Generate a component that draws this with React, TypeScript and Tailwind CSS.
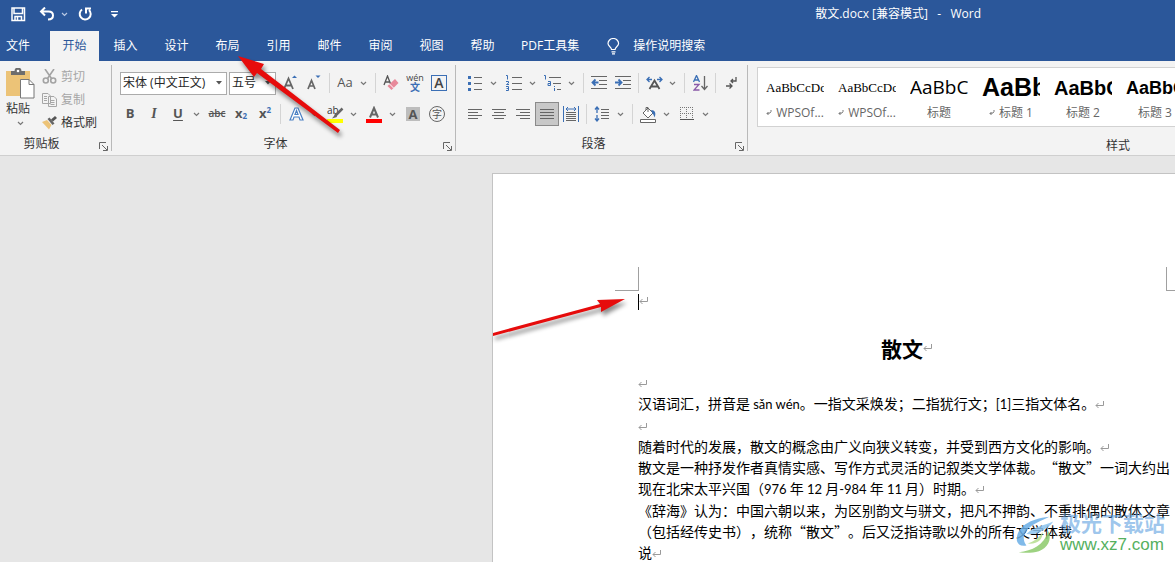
import { ReactNode } from 'react';
import clsx from 'clsx';

const tabs = ['开始', '插入', '设计', '布局', '引用', '邮件', '审阅', '视图', '帮助'];

const styleItems = [
  { name: 'WPSOf...', sample: 'AaBbCcDd', mark: true, font: "font-['Liberation_Serif',serif] text-[13px]" },
  { name: 'WPSOf...', sample: 'AaBbCcDd', mark: true, font: "font-['Liberation_Serif',serif] text-[13px]" },
  { name: '标题', sample: 'AaBbC', mark: false, font: 'text-[19px]' },
  { name: '标题 1', sample: 'AaBb', mark: true, font: "font-['Liberation_Sans',sans-serif] text-[25px] font-bold" },
  { name: '标题 2', sample: 'AaBbC', mark: false, font: "font-['Liberation_Sans',sans-serif] text-[20px] font-bold" },
  { name: '标题 3', sample: 'AaBbC', mark: false, font: "font-['Liberation_Sans',sans-serif] text-[18px] font-bold" },
  { name: '标题 4', sample: 'AaBbC', mark: false, font: "font-['Liberation_Sans',sans-serif] text-[18px] font-bold" },
];

function Chevron() {
  return (
    <svg width="7" height="5" viewBox="0 0 7 5" fill="none" stroke="currentColor">
      <path d="M1 1l2.5 2.5L6 1" strokeWidth="1.2" />
    </svg>
  );
}

function ToolButton({ label, active, children }: { label: string; active?: boolean; children: ReactNode }) {
  return (
    <button
      type="button"
      aria-label={label}
      className={clsx(
        'flex h-6 w-6 shrink-0 items-center justify-center',
        active && 'border border-[#8a8a8a] bg-[#c8c8c8]'
      )}
    >
      {children}
    </button>
  );
}

function SplitButton({ label, children }: { label: string; children: ReactNode }) {
  return (
    <div className="mr-[3px] flex shrink-0 items-center">
      <ToolButton label={label}>{children}</ToolButton>
      <button type="button" aria-label={`${label}选项`} className="flex h-6 w-3 items-center justify-center text-[#777]">
        <Chevron />
      </button>
    </div>
  );
}

function Separator() {
  return (
    <div className="flex h-5 w-[7px] shrink-0 justify-center">
      <div className="w-px bg-[#d4d4d4]" />
    </div>
  );
}

function ComboBox({ label, value, className }: { label: string; value: string; className: string }) {
  return (
    <div className={clsx('mr-0.5 flex h-[23px] items-center border border-[#ababab] bg-white pr-1 pl-0.5', className)}>
      <select aria-label={label} defaultValue={value} className="min-w-0 flex-1 appearance-none bg-transparent text-[#262626] outline-none">
        <option value={value}>{value}</option>
      </select>
      <svg width="6" height="4" viewBox="0 0 6 4" fill="#555">
        <path d="M0 0h6L3 3.5z" />
      </svg>
    </div>
  );
}

function RibbonGroup({ title, className, children }: { title: string; className: string; children: ReactNode }) {
  return (
    <section className={clsx('my-1 flex shrink-0 flex-col border-r border-[#b9b9b9]', className)}>
      <div className="h-[71px]">{children}</div>
      <div className="flex h-4 items-center">
        <h2 className="flex-1 pt-0.5 text-center leading-4">{title}</h2>
        <button type="button" aria-label={`${title}设置`} className="flex h-4 w-4 items-end pl-1">
          <svg width="9" height="9" viewBox="0 0 9 9" fill="none" stroke="#666">
            <path d="M.5 7V.5H7M3 3l5 5M8.500 4v4.500H4" />
          </svg>
        </button>
      </div>
    </section>
  );
}

function Lines({ rows }: { rows: number[][] }) {
  return (
    <svg width="16" height="14" viewBox="0 0 16 14" stroke="#666">
      {rows.map(([start, end], i) => (
        <path key={i} d={`M${start} ${i * 3 + 2.5}H${end}`} />
      ))}
    </svg>
  );
}

function ParagraphMark() {
  return (
    <svg className="inline-block" width="10" height="9" viewBox="0 0 10 9" fill="none" stroke="#9a9a9a">
      <path d="M8.500 0v4.500H1M3.500 2L1 4.500 3.500 7" />
    </svg>
  );
}

function Latin({ children }: { children: ReactNode }) {
  return <span className="font-[Lato,sans-serif] text-[13px]">{children}</span>;
}

function TitleBar() {
  return (
    <div className="flex h-[31px] items-center pb-[3px] pl-[11px]">
      <button type="button" aria-label="保存">
        <svg width="15" height="15" viewBox="0 0 15 15" fill="none" stroke="#fff" strokeWidth="1.500">
          <path d="M1 1h12.500v12.500H1zM3 1v5.500h8.500V1M4 13.500V9.500h6.500v4M6.500 10v3.500" />
        </svg>
      </button>
      <button type="button" aria-label="撤消" className="ml-[13px]">
        <svg width="16" height="14" viewBox="0 0 16 14" fill="none" stroke="#fff" strokeWidth="2">
          <path d="M6 0.500L2 4.500l4 4M2 4.500h7.500c3.500 0 4.500 2 4.500 4 0 2.500-2 4-5 4" />
        </svg>
      </button>
      <button type="button" aria-label="撤消选项" className="ml-[6px] text-[#b9c9e4]">
        <Chevron />
      </button>
      <button type="button" aria-label="重复" className="ml-[10px]">
        <svg width="15" height="15" viewBox="0 0 15 15" fill="none" stroke="#fff" strokeWidth="2">
          <path d="M4 2.500A5.500 5.500 0 1 0 11 3M8 6.500V1.500H13" />
        </svg>
      </button>
      <button type="button" aria-label="自定义快速访问工具栏" className="ml-[18px]">
        <svg width="7" height="7" viewBox="0 0 7 7" fill="#fff">
          <path d="M0 0h7v1.200H0zM0 3h7L3.500 6.500z" />
        </svg>
      </button>
      <h1 className="mr-[194px] ml-auto whitespace-pre">散文.docx [兼容模式]   -   Word</h1>
    </div>
  );
}

function TabBar() {
  return (
    <nav className="flex h-[30px] items-stretch">
      <button type="button" className="mr-[14px] px-1.5">
        文件
      </button>
      <div className="flex gap-0.5">
        {tabs.map((tab) => (
          <button
            key={tab}
            type="button"
            className={clsx('w-[49px]', tab === '开始' && 'bg-[#f3f3f3] text-[#2b579a]')}
          >
            {tab}
          </button>
        ))}
        <button type="button" className="px-3">
          PDF工具集
        </button>
      </div>
      <button type="button" className="ml-4 flex items-center gap-[13px]">
        <svg width="13" height="17" viewBox="0 0 13 17" fill="none" stroke="#fff" strokeWidth="1.200">
          <path d="M4.500 11.500C4.500 9 1 8.500 1 5.500a5.300 5 0 0 1 10.600 0c0 3-3.500 3.500-3.500 6zM4.500 13.800h4M5 15.800h3" />
        </svg>
        操作说明搜索
      </button>
    </nav>
  );
}

function ClipboardGroup() {
  return (
    <RibbonGroup title="剪贴板" className="w-28 [&_h2]:pr-3">
      <div className="flex">
        <button type="button" className="flex w-9 flex-col items-start pt-[3px] pl-1.5">
          <svg width="29" height="31" viewBox="0 0 29 31">
            <path d="M0 3h24v25H0z" fill="#ecc377" />
            <path d="M5 7V3h3.500a3.500 3.500 0 0 1 7 0H19v4z" fill="#6d6d6d" />
            <circle cx="12" cy="3" r="1.300" fill="#fff" />
            <path d="M14.500 11.500H23l5 5v13.500H14.500z" fill="#fff" stroke="#777" />
            <path d="M23 11.500v5h5" fill="none" stroke="#777" />
          </svg>
          <span className="leading-5">粘贴</span>
          <span className="flex h-2 w-7 items-center justify-center text-[#777]">
            <Chevron />
          </span>
        </button>
        <div className="flex flex-col pl-[6px] leading-[23px]">
          <button type="button" disabled className="flex items-center gap-1 text-[#a6a6a6]">
            <svg width="15" height="15" viewBox="0 0 15 15" fill="none" stroke="#a3a3a3" strokeWidth="1.600">
              <path d="M3 0l6.500 9.500M12 0L5.500 9.500" />
              <circle cx="3.800" cy="11.500" r="2.500" />
              <circle cx="11.200" cy="11.500" r="2.500" />
            </svg>
            剪切
          </button>
          <button type="button" disabled className="flex items-center gap-1 text-[#a6a6a6]">
            <svg width="15" height="14" viewBox="0 0 15 14" fill="#f3f3f3" stroke="#a6a6a6">
              <path d="M.5.500H6L8.500 3v7.500h-8zM6.500 3.500H12L14.500 6v7.500h-8zM2 3.500h3M2 5.500h3M2 7.500h3M8.500 7.500h4M8.500 9.500h4M8.500 11.500h4" />
            </svg>
            复制
          </button>
          <button type="button" className="flex items-center gap-1">
            <svg width="15" height="15" viewBox="0 0 15 15">
              <path d="M0 7l5-2 4.500 5L7 14.500z" fill="#ecc377" />
              <path d="M5.500 4l2-1.500 5 6-2 1.500z" fill="#666" />
              <path d="M9 4.500L13 1l2 2-4 3.500z" fill="#555" />
            </svg>
            格式刷
          </button>
        </div>
      </div>
    </RibbonGroup>
  );
}

function FontGroup() {
  return (
    <RibbonGroup title="字体" className="w-[344px]">
      <div className="flex h-9 items-center pl-2">
        <ComboBox label="字体" value="宋体 (中文正文)" className="w-[107px]" />
        <ComboBox label="字号" value="五号" className="w-[47px]" />
        <ToolButton label="增大字号">
          <svg width="15" height="16" viewBox="0 0 15 16" fill="none" stroke="#666" strokeWidth="1.800">
            <path d="M1 14L5.500 3.500 10 14M2.500 10.500h6" />
            <path d="M9 3L11.500 .5 14 3z" fill="#3b6fb5" stroke="none" />
          </svg>
        </ToolButton>
        <ToolButton label="减小字号">
          <svg width="14" height="16" viewBox="0 0 14 16" fill="none" stroke="#666" strokeWidth="1.700">
            <path d="M1 14l3.500-8.500L8 14M2.500 11h4" />
            <path d="M8.500 .5h5L11 3z" fill="#3b6fb5" stroke="none" />
          </svg>
        </ToolButton>
        <Separator />
        <SplitButton label="更改大小写">
          <span className="text-[13px] text-[#555]">Aa</span>
        </SplitButton>
        <Separator />
        <ToolButton label="清除所有格式">
          <svg width="16" height="16" viewBox="0 0 16 16" fill="none">
            <path d="M1 10L4.500 1 8 10M2.500 7h4" stroke="#555" strokeWidth="1.300" />
            <path d="M4.500 11L12 4l3.500 4L8.500 15z" fill="#e8899a" />
            <path d="M6.500 9l4 4" stroke="#fff" />
          </svg>
        </ToolButton>
        <ToolButton label="拼音指南">
          <svg width="18" height="18" viewBox="0 0 18 18" textAnchor="middle">
            <text x="9" y="7" fontSize="9" fill="#444">wén</text>
            <text x="9" y="17" fontSize="10" fontWeight="bold" fill="#3b6fb5">文</text>
          </svg>
        </ToolButton>
        <ToolButton label="字符边框">
          <span className="flex h-4 w-4 items-center justify-center border border-[#3b6fb5] text-sm font-semibold text-[#444]">A</span>
        </ToolButton>
      </div>
      <div className="flex h-[26px] items-center pl-1.5 text-[13px] font-bold text-[#555]">
        <ToolButton label="加粗">B</ToolButton>
        <ToolButton label="倾斜">
          <em className="font-['Liberation_Serif',serif] text-sm">I</em>
        </ToolButton>
        <SplitButton label="下划线">
          <u className="underline-offset-2">U</u>
        </SplitButton>
        <ToolButton label="删除线">
          <s className="text-[10px] font-semibold">abc</s>
        </ToolButton>
        <ToolButton label="下标">
          x<sub className="text-[8px] text-[#3b6fb5]">2</sub>
        </ToolButton>
        <ToolButton label="上标">
          x<sup className="text-[8px] text-[#3b6fb5]">2</sup>
        </ToolButton>
        <Separator />
        <SplitButton label="文本效果和版式">
          <svg width="15" height="14" viewBox="0 0 15 14" fill="#fff" stroke="#4a80c4" strokeWidth="1.200">
            <path d="M1 13L6 1h3l5 12h-3l-1-3H5l-1 3zM6 7.500h3L7.500 3.500z" />
          </svg>
        </SplitButton>
        <SplitButton label="文本突出显示颜色">
          <svg width="17" height="17" viewBox="0 0 17 17" fill="none" stroke="#666">
            <text x="0" y="8" fontSize="10" fontWeight="normal" fill="#333" stroke="none">ab</text>
            <path d="M15.500 2.500L8 10" strokeWidth="2.500" />
            <path d="M8.500 8L5 12.500 10 11z" fill="#666" stroke="none" />
            <path d="M0 15h16" stroke="#ff0" strokeWidth="4" />
          </svg>
        </SplitButton>
        <SplitButton label="字体颜色">
          <svg width="16" height="17" viewBox="0 0 16 17" fill="none">
            <path d="M4 11.500L8 2l4 9.500M5.500 8.500h5" stroke="#666" strokeWidth="2" />
            <path d="M0 15h16" stroke="#f00" strokeWidth="4" />
          </svg>
        </SplitButton>
        <ToolButton label="字符底纹">
          <span className="w-3.5 bg-[#bdbdbd] text-center leading-[14px]">A</span>
        </ToolButton>
        <ToolButton label="带圈字符">
          <span className="h-4 w-4 rounded-full border border-[#666] text-center text-[10px] leading-[14px] font-normal">字</span>
        </ToolButton>
      </div>
    </RibbonGroup>
  );
}

function ParagraphGroup() {
  return (
    <RibbonGroup title="段落" className="w-[292px]">
      <div className="flex h-9 items-center pl-[7px]">
        <SplitButton label="项目符号">
          <svg width="15" height="15" viewBox="0 0 15 15" stroke="#666" fill="#3b6fb5">
            <path d="M6 1.500h8M6 7.500h8M6 13.500h8" />
            <path d="M0 0h3v3H0zM0 6h3v3H0zM0 12h3v3H0z" stroke="none" />
          </svg>
        </SplitButton>
        <SplitButton label="编号">
          <svg width="16" height="16" viewBox="0 0 16 16" stroke="#666" fill="none">
            <path d="M6 2.500h10M6 8.500h10M6 14.500h10" />
            <path d="M0 .5h1.500V4.500M0 6.500h2.500v1.500L.5 9.500H3M0 11.500h2.500v4H0M.5 13.500h2" stroke="#3b6fb5" />
          </svg>
        </SplitButton>
        <SplitButton label="多级列表">
          <svg width="18" height="16" viewBox="0 0 18 16" stroke="#666" fill="none">
            <path d="M5 2.500h12M9 8.500h8M13 14.500h4" />
            <path d="M0 .5h1.500v4M4 6.500h2.500v4H4v-2h2.500M10.500 11v1M10.500 13v3" stroke="#3b6fb5" />
          </svg>
        </SplitButton>
        <Separator />
        <ToolButton label="减少缩进量">
          <svg width="16" height="14" viewBox="0 0 16 14" stroke="#666" fill="none">
            <path d="M0 .5h16M8 4.500h8M8 8.500h8M0 12.500h16" />
            <path d="M7.500 6.500H1.500M4.500 3.500l-3 3 3 3" stroke="#3b6fb5" strokeWidth="1.800" />
          </svg>
        </ToolButton>
        <ToolButton label="增加缩进量">
          <svg width="16" height="14" viewBox="0 0 16 14" stroke="#666" fill="none">
            <path d="M0 .5h16M8 4.500h8M8 8.500h8M0 12.500h16" />
            <path d="M0 6.500h6M3.500 3.500l3 3-3 3" stroke="#3b6fb5" strokeWidth="1.800" />
          </svg>
        </ToolButton>
        <Separator />
        <SplitButton label="中文版式">
          <svg width="17" height="14" viewBox="0 0 17 14" fill="none" stroke="#555" strokeWidth="1.800">
            <path d="M3.500 13l5-8.500 5 8.500M5.500 10.500h6" />
            <path d="M6 3.500H1M3.500 1L1 3.500 3.500 6M11 3.500h5M13.500 1L16 3.500 13.500 6" stroke="#3b6fb5" strokeWidth="1.300" />
          </svg>
        </SplitButton>
        <Separator />
        <ToolButton label="排序">
          <svg width="15" height="16" viewBox="0 0 15 16" fill="none" strokeWidth="1.300">
            <path d="M.5 7L3.500.500 6.500 7M1.500 5h4" stroke="#3b6fb5" />
            <path d="M1 9.500h5L1 15h5.500" stroke="#8a5aa8" />
            <path d="M11.500 1v13M8.500 11l3 3.500 3-3.500" stroke="#666" />
          </svg>
        </ToolButton>
        <Separator />
        <ToolButton label="显示/隐藏编辑标记">
          <svg width="11" height="14" viewBox="0 0 11 14" fill="none" stroke="#555" strokeWidth="1.300">
            <path d="M10 1v4H5M7 3L5 5l2 2M0 10h6M3.500 7.500L6 10l-2.500 2.500" />
          </svg>
        </ToolButton>
      </div>
      <div className="flex h-[26px] items-center pl-[7px]">
        <ToolButton label="左对齐">
          <Lines rows={[[1, 15], [1, 11], [1, 15], [1, 11]]} />
        </ToolButton>
        <ToolButton label="居中">
          <Lines rows={[[1, 15], [3, 13], [1, 15], [3, 13]]} />
        </ToolButton>
        <ToolButton label="右对齐">
          <Lines rows={[[1, 15], [5, 15], [1, 15], [5, 15]]} />
        </ToolButton>
        <ToolButton label="两端对齐" active>
          <Lines rows={[[1, 15], [1, 15], [1, 15], [1, 15]]} />
        </ToolButton>
        <ToolButton label="分散对齐">
          <svg width="16" height="16" viewBox="0 0 16 16" fill="none" stroke="#666">
            <path d="M3 6.500h10M3 8.500h10M3 10.500h10M3 12.500h10M3 14.500h10" />
            <path d="M.5 0v16M15.500 0v16M3 3h10M5 1L3 3l2 2M11 1l2 2-2 2" stroke="#3b6fb5" />
          </svg>
        </ToolButton>
        <Separator />
        <SplitButton label="行和段落间距">
          <svg width="16" height="16" viewBox="0 0 16 16" fill="none" stroke="#666">
            <path d="M7 3.500h8M7 6.500h8M7 9.500h8M7 12.500h8" />
            <path d="M3 1v6M1 3.500L3 1l2 2.500M3 9v6M1 12.500L3 15l2-2.500" stroke="#3b6fb5" strokeWidth="1.300" />
          </svg>
        </SplitButton>
        <Separator />
        <SplitButton label="底纹">
          <svg width="17" height="17" viewBox="0 0 17 17" fill="#fff" stroke="#666">
            <path d="M3 7l5-5 5 5-5 5zM6 4V1.500h2V6" />
            <path d="M11 4c4 0 5.500 3 3.500 7.500-.5-2-1-3-2-4z" fill="#3b6fb5" stroke="none" />
            <path d="M.5 13.500h15v3H.5z" />
          </svg>
        </SplitButton>
        <SplitButton label="边框">
          <svg width="14" height="14" viewBox="0 0 14 14" fill="none" stroke="#777" strokeDasharray="1 1">
            <path d="M.5 0v14M6.500 0v14M12.500 0v14M0 .5h14M0 6.500h14" />
            <path d="M0 12.500h14" stroke="#555" strokeDasharray="none" />
          </svg>
        </SplitButton>
      </div>
    </RibbonGroup>
  );
}

function StylesGroup() {
  return (
    <section className="my-1 w-[740px] shrink-0">
      <div className="h-[71px] pt-0.5 pl-[9px]">
        <div className="flex h-[60px] overflow-hidden border border-[#d2d2d2] bg-white pl-px">
          {styleItems.map((item, i) => (
            <button key={i} type="button" className="flex w-[72px] shrink-0 flex-col px-[7px] pt-1">
              <span className={clsx('flex h-8 w-full items-center overflow-hidden text-black', item.font)}>
                {item.sample}
              </span>
              <span className="flex h-[18px] w-full items-center justify-center gap-1 whitespace-nowrap text-[#666]">
                {item.mark && (
                  <svg width="6" height="6" viewBox="0 0 6 6" fill="none" stroke="#777">
                    <path d="M5 0v1.500Q5 3.500 1 3.500M2.500 2L1 3.500 2.500 5" />
                  </svg>
                )}
                {item.name}
              </span>
            </button>
          ))}
        </div>
      </div>
      <h2 className="pt-0.5 text-center leading-4">样式</h2>
    </section>
  );
}

function DocumentPage() {
  return (
    <main className="ml-[492px] flex-1 overflow-hidden border-t border-l border-[#c3c3c3] bg-white text-sm leading-[21px] text-black">
      <div className="flex pt-[93px] pl-[122px]">
        <div className="h-6 w-6 shrink-0 border-r border-b border-[#a0a0a0]" />
        <div className="w-[527px] shrink-0" />
        <div className="h-6 w-6 shrink-0 border-b border-l border-[#a0a0a0]" />
      </div>
      <article className="ml-[145px] w-[528px] whitespace-nowrap [text-spacing-trim:space-all]">
        <p className="flex h-[21px] items-center">
          <span className="h-4 w-px bg-black" />
          <ParagraphMark />
        </p>
        <h2 className="mt-[21px] mb-[9px] flex items-center justify-center text-[21px] leading-[30px] font-bold">
          散文
          <span className="-mr-3 flex w-3">
            <ParagraphMark />
          </span>
        </h2>
        <p>
          <ParagraphMark />
        </p>
        <p>
          汉语词汇，拼音是 <Latin>sǎn wén</Latin>。一指文采焕发；二指犹行文；<Latin>[1]</Latin>三指文体名。
          <ParagraphMark />
        </p>
        <p>
          <ParagraphMark />
        </p>
        <p>
          随着时代的发展，散文的概念由广义向狭义转变，并受到西方文化的影响。
          <ParagraphMark />
        </p>
        <p>
          散文是一种抒发作者真情实感、写作方式灵活的记叙类文学体裁。“散文”一词大约出
          <br />
          现在北宋太平兴国（<Latin>976</Latin> 年 <Latin>12</Latin> 月<Latin>-984</Latin> 年 <Latin>11</Latin> 月）时期。
          <ParagraphMark />
        </p>
        <p>
          《辞海》认为：中国六朝以来，为区别韵文与骈文，把凡不押韵、不重排偶的散体文章
          <br />
          （包括经传史书），统称“散文”。后又泛指诗歌以外的所有文学体裁
          <br />
          说
          <ParagraphMark />
        </p>
      </article>
    </main>
  );
}

function Watermark() {
  return (
    <div className="pointer-events-none absolute top-[511px] left-[1014px] flex items-center">
      <svg width="44" height="44" viewBox="0 0 44 46" opacity="0.850">
        <path d="M2 31C1 18 14 8 36 6c-8 4-20 8-25 16-3 5-2 10 1 14-6 1-9-1-10-5z" fill="#6aaee6" />
        <path d="M12 24c8-8 20-9 28-13-3 5-8 8-14 11-4 2-9 3-14 2z" fill="#8cc4ee" />
        <path d="M4 43c14-1 26-7 31-22 4 9-1 18-10 21-7 2-14 2-21 1z" fill="#8ccb6c" />
        <path d="M13 34c7-2 12-6 16-12 0 8-5 13-16 12z" fill="#b5dd8e" />
      </svg>
      <div className="ml-0.5 flex flex-col">
        <span className="text-[21px] leading-6 font-bold text-[#5e9fe0]/60">极光下载站</span>
        <span className="font-['Liberation_Sans',sans-serif] text-[17px] leading-5 text-[#55b060]">www.xz7.com</span>
      </div>
    </div>
  );
}

function Arrows() {
  return (
    <svg
      className="pointer-events-none absolute top-0 left-0 drop-shadow-[2px_4px_2px_rgba(0,0,0,0.45)]"
      width="640"
      height="350"
      viewBox="0 0 640 350"
      fill="#e60c0c"
    >
      <path d="M238 56l26 8-3 5 79 61-2 3-81-60-3 4z" />
      <path d="M493 333l107-29-3-4 28-1-24 13v-5L493 336z" />
    </svg>
  );
}

export default function App() {
  return (
    <div
      lang="zh-CN"
      className="relative flex min-h-screen flex-col overflow-hidden bg-[#e6e6e6] font-['Open_Sans','Noto_Sans_CJK_SC',sans-serif] text-xs text-[#333]"
    >
      <header className="bg-[#2b579a] text-white">
        <TitleBar />
        <TabBar />
      </header>
      <div className="mb-[17px] flex h-[95px] overflow-hidden border-b border-[#cfcfcf] bg-[#f3f3f3]">
        <ClipboardGroup />
        <FontGroup />
        <ParagraphGroup />
        <StylesGroup />
      </div>
      <div className="flex h-0 flex-1 flex-col font-['Noto_Sans_CJK_SC',sans-serif]">
        <DocumentPage />
      </div>
      <Watermark />
      <Arrows />
    </div>
  );
}
